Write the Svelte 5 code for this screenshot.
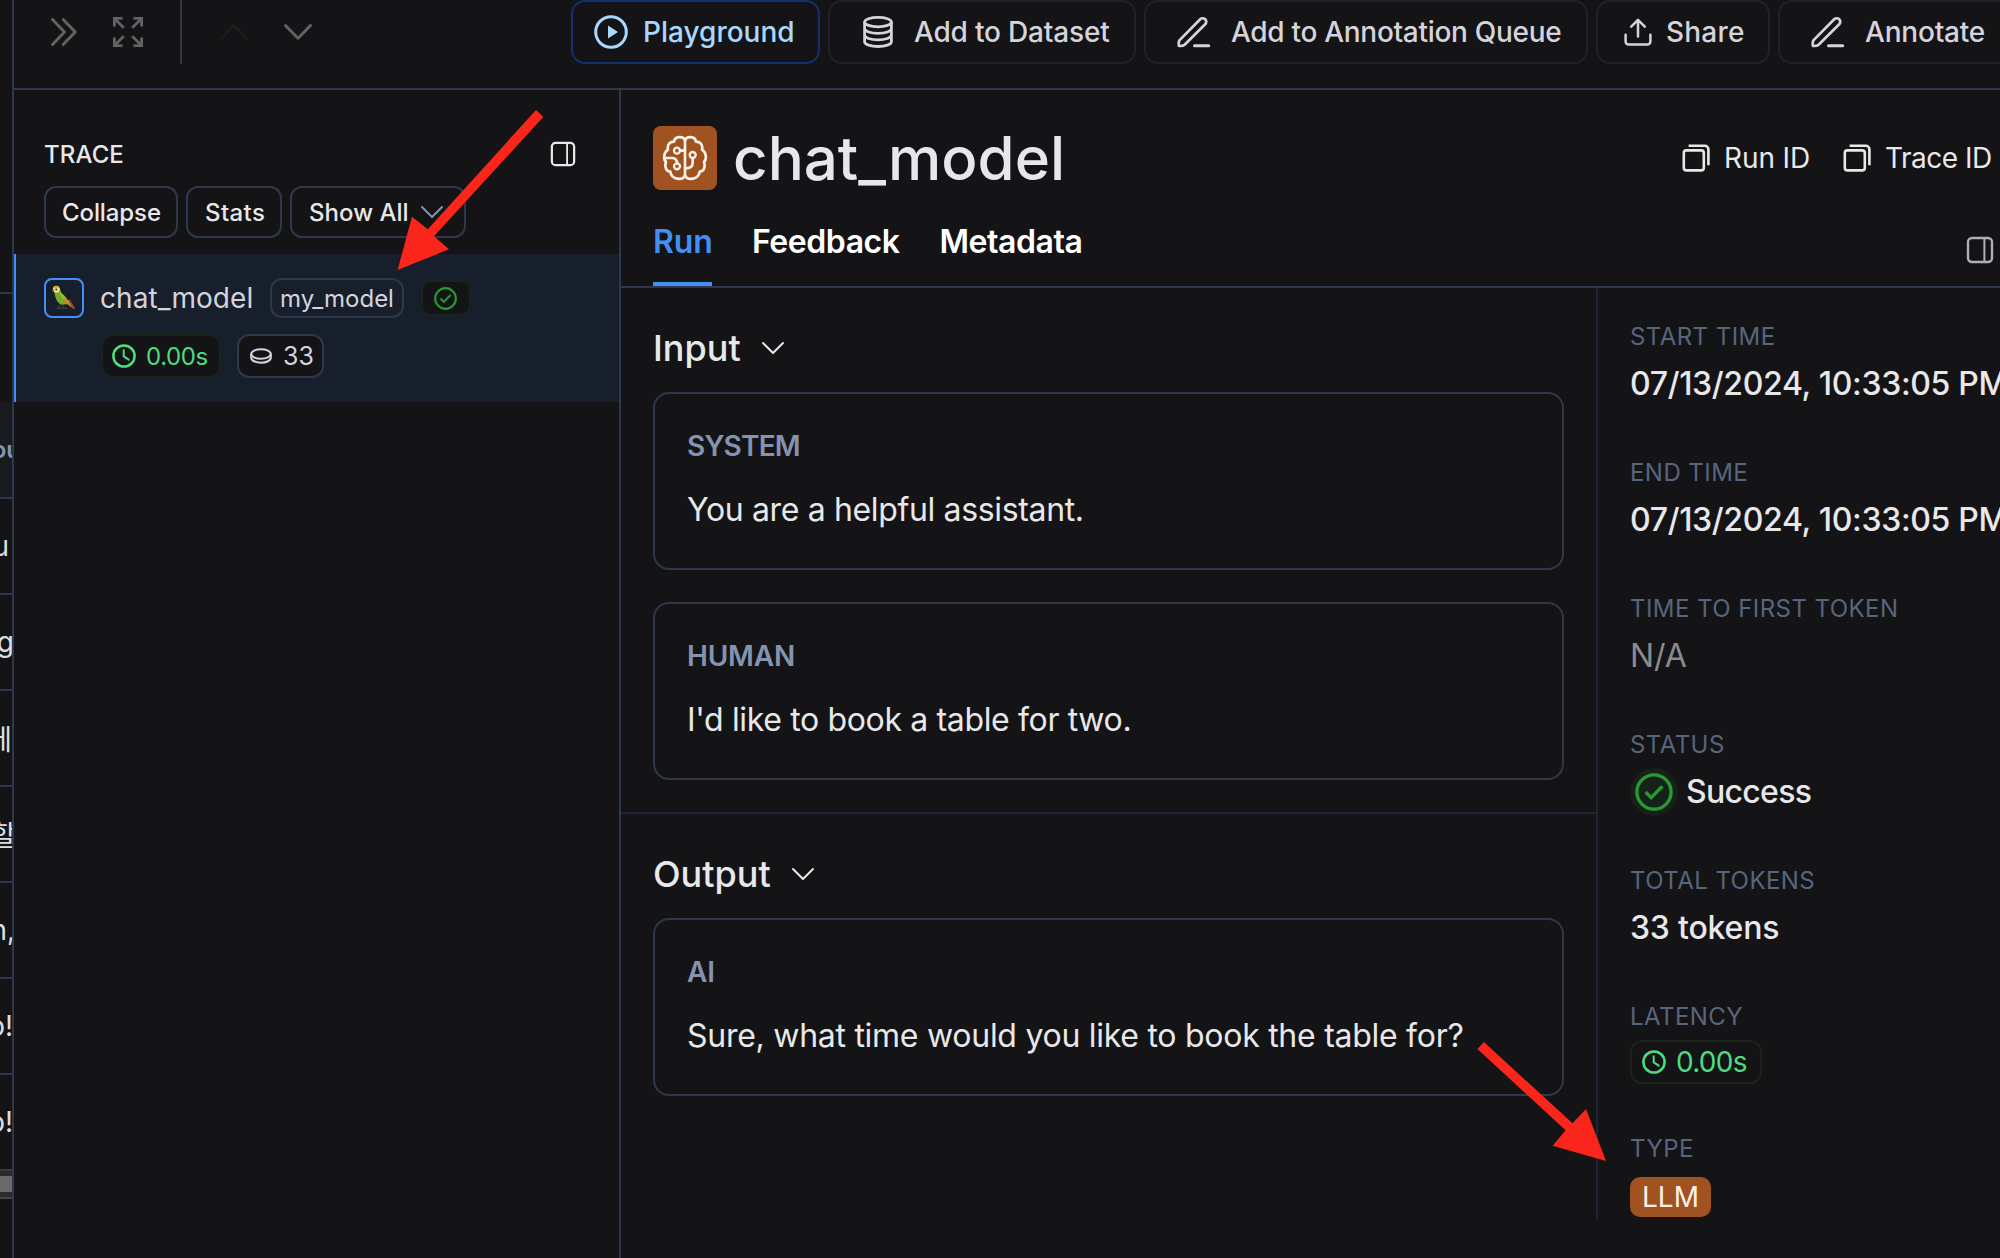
<script>
  const rows = [
    { text: 'u', shift: 3 },
    { text: 'g', shift: -2 },
    { text: '에', shift: 0 },
    { text: '할', shift: -4 },
    { text: 'n,', shift: -3 },
    { text: 'o!', shift: -1 },
    { text: 'o!', shift: -1 }
  ];

  const inputs = [
    { role: 'SYSTEM', tone: 'system', text: 'You are a helpful assistant.' },
    { role: 'HUMAN', tone: 'human', text: "I'd like to book a table for two." }
  ];
  const outputs = [
    { role: 'AI', tone: 'ai', text: 'Sure, what time would you like to book the table for?' }
  ];

  const tabs = ['Run', 'Feedback', 'Metadata'];
</script>

{#snippet pencil()}
  <svg class="pencil" viewBox="0 0 34 32" fill="none" stroke="currentColor" stroke-width="2.7" stroke-linecap="round" stroke-linejoin="round">
    <path d="M2.4 24.4 23.2 3.3a3.5 3.5 0 0 1 5 0 3.5 3.5 0 0 1 0 5L7.6 28.8c-1.500 1.400-3.600 1.300-5.700 1.100-.2-2-.6-4 .5-5.500z" />
    <path d="M17.5 29.7h14.2" stroke-width="3" />
  </svg>
{/snippet}

{#snippet chevron(cls)}
  <svg class="chevron {cls}" viewBox="0 0 24 14" fill="none" stroke="currentColor" stroke-width="2" stroke-linecap="round" stroke-linejoin="round">
    <path d="M2 2l10 10L22 2" />
  </svg>
{/snippet}

{#snippet sidebar(cls)}
  <svg class="sidebar-icon {cls}" viewBox="0 0 28 28" fill="none" stroke="currentColor">
    <rect x="2" y="2" width="24" height="24" rx="4" stroke-width="2.4" />
    <path d="M18.4 2v24" stroke-width="2" />
  </svg>
{/snippet}

{#snippet copy()}
  <svg class="copy" viewBox="0 0 28 28" fill="none" stroke="currentColor" stroke-width="2.6" stroke-linejoin="round">
    <rect x="1.8" y="6.4" width="20" height="20" rx="2.6" />
    <path d="M6.6 1.8h16.2a3.6 3.6 0 0 1 3.6 3.6v15.8" />
  </svg>
{/snippet}

{#snippet clock()}
  <svg class="clock" viewBox="0 0 24 24" fill="none" stroke="currentColor" stroke-linecap="round" stroke-linejoin="round">
    <circle cx="12" cy="12" r="10.6" stroke-width="2.5" />
    <path d="M11.7 6.3v6l5 3.4" stroke-width="2" />
  </svg>
{/snippet}

{#snippet check()}
  <svg viewBox="0 0 38 38" fill="none" stroke="currentColor" stroke-width="3.4" stroke-linejoin="miter">
    <circle cx="19" cy="19" r="17.1" />
    <path d="M10.6 19l5.6 5.6L27.4 13.2" />
  </svg>
{/snippet}

{#snippet message(m)}
  <article class="card {m.tone}">
    <h3>{m.role}</h3>
    <p>{m.text}</p>
  </article>
{/snippet}

<div class="app">
  <aside class="behind">
    <div class="top-cell"></div>
    <div class="filter-cell"></div>
    <div class="head-cell"><b>ou</b></div>
    {#each rows as row}
      <div class="cell"><span style:margin-right="{row.shift}px">{row.text}</span></div>
    {/each}
    <div class="scroll"><div class="thumb"></div></div>
  </aside>

  <div class="panel">
    <header class="toolbar">
      <div class="nav">
        <svg class="forward" viewBox="0 0 28 30" fill="none" stroke="currentColor" stroke-width="3" stroke-linecap="round" stroke-linejoin="round">
          <path d="M2.5 2.5 14.5 15l-12 12.5M13.2 2.5 25.2 15l-12 12.5" />
        </svg>
        <svg class="expand" viewBox="0 0 32 32" fill="none" stroke="currentColor" stroke-width="2.8">
          <path d="M2.4 10.5V2.4h8.1M2.4 2.4l9.4 9.4M21.5 2.4h8.1v8.1M29.6 2.4l-9.4 9.4M2.4 21.5v8.1h8.1M2.4 29.6l9.4-9.4M21.5 29.6h8.1v-8.1M29.6 29.6l-9.4-9.4" />
        </svg>
        <span class="rule"></span>
        <svg class="step up" viewBox="0 0 30 18" fill="none" stroke="currentColor" stroke-width="3" stroke-linecap="round" stroke-linejoin="round"><path d="M2.500 15.200 15 2.500l12.500 12.700" /></svg>
        <svg class="step" viewBox="0 0 30 18" fill="none" stroke="currentColor" stroke-width="3" stroke-linecap="round" stroke-linejoin="round"><path d="M2.500 2.500 15 15.200 27.500 2.500" /></svg>
      </div>
      <div class="actions">
        <button class="playground">
          <svg viewBox="0 0 34 34"><circle cx="17" cy="17" r="15.3" fill="none" stroke="currentColor" stroke-width="3" /><path d="M14 10.6v12.8l10-6.4z" fill="currentColor" /></svg>
          Playground
        </button>
        <button class="dataset">
          <svg viewBox="0 0 30 32" fill="none" stroke="currentColor" stroke-width="2.8">
            <ellipse cx="15" cy="6.1" rx="13.4" ry="4.7" />
            <path d="M1.6 6.1v19.6c0 2.7 6 4.8 13.4 4.8s13.4-2.1 13.4-4.8V6.1M1.6 12.6c0 2.7 6 4.8 13.4 4.8s13.4-2.1 13.4-4.8M1.6 19.1c0 2.7 6 4.8 13.4 4.8s13.4-2.1 13.4-4.8" />
          </svg>
          Add to Dataset
        </button>
        <button class="queue">{@render pencil()}Add to Annotation Queue</button>
        <button class="share">
          <svg viewBox="0 0 28 28" fill="none" stroke="currentColor" stroke-width="2.5" stroke-linecap="round" stroke-linejoin="round">
            <path d="M14 18.5V2M7.2 8.6 14 1.8l6.8 6.8M1.6 16.8v6.800a3 3 0 0 0 3 3h18.800a3 3 0 0 0 3-3v-6.800" />
          </svg>
          Share
        </button>
        <button class="annotate">{@render pencil()}Annotate</button>
      </div>
    </header>

    <div class="body">
      <section class="trace">
        <div class="trace-head">
          <h2>TRACE</h2>
          {@render sidebar('small')}
        </div>
        <div class="filters">
          <button class="collapse">Collapse</button>
          <button class="stats">Stats</button>
          <button class="show">Show All {@render chevron('muted')}</button>
        </div>
        <div class="node">
          <div class="node-main">
            <span class="parrot">
              <svg viewBox="0 0 26 26">
                <path d="M14 16l8.500 8.200 1.700-.7-5.600-9.100z" fill="#b7401d" />
                <path d="M3.600 5.500C3.300 10 5 16.500 9.600 19.600c2.500.2 5.500-.8 7.200-.2l3.700 3.200c-1.200-4.400-4.300-8.600-9-12.400L8.600 3z" fill="#79a928" />
                <path d="M7.500 6.500c5.200 2.400 9.200 7.200 11.200 12.700-4.600-1.800-8.700-5.500-11.200-12.700z" fill="#94bd32" />
                <path d="M13.500 13l5 6.300-5.500-2.800z" fill="#d87928" />
                <circle cx="5.300" cy="4.300" r="3.500" fill="#e8df8b" />
                <path d="M2.300 3.500C3 .700 6.600.400 8 2.300L5.200 3z" fill="#d8a628" />
                <path d="M3 4.200.900 6.500l2.300-.1z" fill="#b6473a" />
                <circle cx="5.300" cy="4.400" r=".9" fill="#2b2a18" />
                <path d="M8 20v2.600M12 20v2.600M5.500 23.300h11" stroke="#4b4640" stroke-width="1.100" fill="none" />
              </svg>
            </span>
            <span class="node-name">chat_model</span>
            <span class="model">my_model</span>
            <span class="ok">{@render check()}</span>
          </div>
          <div class="node-meta">
            <span class="latency">{@render clock()}0.00s</span>
            <span class="count">
              <svg viewBox="0 0 22 16" fill="none" stroke="currentColor" stroke-width="2"><ellipse cx="11" cy="6" rx="9.800" ry="4.700" /><path d="M1.200 6v3.800c0 2.700 4.200 4.900 9.800 4.900s9.800-2.200 9.800-4.900V6" /></svg>
              33
            </span>
          </div>
        </div>
      </section>

      <main class="run">
        <div class="run-head">
          <div class="title-row">
            <span class="brain">
              <svg viewBox="0 0 138 138" fill="none" stroke="currentColor" stroke-width="8" stroke-linejoin="round" stroke-linecap="round">
                <path d="M69 15C64 3 39 2 36 20 22 20 15 31 18 44 5 52 3 73 12 81c-5 15 1 29 13 29 4 24 36 28 44 12" />
                <path d="M69 15c5-12 30-13 33 5 14 0 21 11 18 24 13 8 15 29 6 37 5 15-1 29-13 29-4 24-36 28-44 12" />
                <path d="M69 15v107" />
                <circle cx="45" cy="47" r="9" stroke-width="7" /><path d="M54 47h14" />
                <circle cx="45" cy="94" r="9" stroke-width="7" /><path d="M8 69h22c10 0 15 5 15 16" />
                <circle cx="92" cy="60" r="9" stroke-width="7" /><path d="M92 69v14c0 11-6 17-22 17" />
              </svg>
            </span>
            <h1>chat_model</h1>
            <div class="ids">
              <span class="run-id">{@render copy()}Run ID</span>
              <span class="trace-id">{@render copy()}Trace ID</span>
            </div>
          </div>
          <nav class="tabs">
            {#each tabs as tab, i}
              <button class:active={i === 0}>{tab}</button>
            {/each}
            {@render sidebar('large')}
          </nav>
        </div>

        <div class="columns">
          <div class="content">
            <section>
              <h2>Input {@render chevron('')}</h2>
              {#each inputs as m}{@render message(m)}{/each}
            </section>
            <section>
              <h2>Output {@render chevron('')}</h2>
              {#each outputs as m}{@render message(m)}{/each}
            </section>
          </div>
          <dl class="details">
            <div><dt>START TIME</dt><dd class="strong">07/13/2024, 10:33:05 PM</dd></div>
            <div><dt>END TIME</dt><dd class="strong">07/13/2024, 10:33:05 PM</dd></div>
            <div><dt>TIME TO FIRST TOKEN</dt><dd class="empty">N/A</dd></div>
            <div><dt>STATUS</dt><dd class="success"><span class="halo">{@render check()}</span>Success</dd></div>
            <div><dt>TOTAL TOKENS</dt><dd class="strong tokens">33 tokens</dd></div>
            <div><dt>LATENCY</dt><dd class="pill-row"><span class="latency big">{@render clock()}0.00s</span></dd></div>
            <div><dt>TYPE</dt><dd class="type-row"><span class="llm">LLM</span></dd></div>
          </dl>
        </div>
      </main>
    </div>
  </div>

  <svg class="arrows" viewBox="0 0 2000 1258" fill="#fb261b">
    <path d="M536 110l7.300 7L434 236.300l15 13L397.600 270 412 216.700l15.800 12.600z" />
    <path d="M1483.900 1042l-6.500 7 88.200 81.300-12.900 15.400L1606 1161l-20-52-13.500 14.300z" />
  </svg>
</div>

<style>
  :global(body) { background: #141416; overflow: hidden; }
  .app, .app * { box-sizing: border-box; }
  .app {
    position: relative;
    display: flex;
    width: 2000px;
    height: 1258px;
    overflow: hidden;
    background: #141416;
    color: #e8e8ea;
    font-family: Inter, "Noto Sans CJK KR", sans-serif;
  }
  h1, h2, h3, p, dl, dd { margin: 0; }
  svg { display: block; flex: none; }
  button {
    display: flex;
    align-items: center;
    padding: 0;
    border: 0;
    background: none;
    color: inherit;
    font-family: inherit;
    white-space: nowrap;
  }

  .behind { width: 12px; flex: none; overflow: hidden; color: #dedee0; font-size: 28px; }
  .behind > div { display: flex; justify-content: flex-end; align-items: center; overflow: hidden; border-bottom: 2px solid #2d394b; }
  .top-cell { height: 294px; }
  .behind > .filter-cell { height: 108px; border: 0; }
  .head-cell { height: 97px; background: #181a1e; color: #8296b3; font-size: 24px; }
  .head-cell b { margin-right: -9px; font-weight: 600; }
  .cell { height: 96px; }
  .behind > .scroll { height: 30px; margin-top: -2px; background: #2b2b2c; border-top: 2px solid #3c3c3d; border-bottom: 2px solid #454546; }
  .thumb { width: 12px; height: 16px; background: #69696a; }

  .panel { flex: 1; min-width: 0; border-left: 2px solid #2d394b; display: flex; flex-direction: column; }
  .toolbar { display: flex; height: 90px; border-bottom: 2px solid #2d394b; flex: none; }
  .nav { width: 557px; height: 64px; padding-left: 36px; display: flex; align-items: center; color: #626264; flex: none; }
  .forward { width: 28px; height: 30px; }
  .expand { width: 32px; height: 32px; margin-left: 34px; }
  .rule { width: 2px; height: 64px; background: #2d394b; margin: 0 37px 0 36px; }
  .step { width: 30px; height: 18px; }
  .up { color: #1d1d1f; margin-right: 34px; }

  .actions { display: flex; gap: 8px; height: 64px; font-size: 28px; color: #d5d3db; flex: none; }
  .actions button { height: 64px; border: 2px solid #212127; border-radius: 14px; font-size: 28px; font-weight: 500; flex: none; }
  .actions .playground { width: 249px; padding-left: 21px; gap: 15px; border-color: #12306e; color: #a8d8ff; letter-spacing: 0; }
  .playground svg { width: 34px; height: 34px; }
  .dataset { width: 308px; padding-left: 33px; gap: 21px; letter-spacing: -.18px; }
  .dataset svg { width: 30px; height: 32px; }
  .queue { width: 444px; padding-left: 31px; gap: 20px; letter-spacing: -.3px; }
  .pencil { width: 34px; height: 32px; }
  .share { width: 174px; padding-left: 26px; gap: 14px; letter-spacing: .2px; }
  .share svg { width: 28px; height: 28px; }
  .annotate { width: 240px; padding-left: 31px; gap: 20px; letter-spacing: -.2px; }

  .body { flex: 1; display: flex; min-height: 0; }
  .trace { width: 607px; border-right: 2px solid #2d394b; flex: none; }
  .trace-head { display: flex; align-items: center; justify-content: space-between; padding: 44px 43px 0 30px; height: 84px; }
  .trace-head h2 { font-size: 24px; line-height: 40px; font-weight: 500; letter-spacing: .1px; padding-top: 2px; }
  .small { width: 26px; height: 26px; }
  .filters { display: flex; gap: 8px; padding: 12px 0 16px 30px; }
  .filters button { height: 52px; border: 2px solid #2d394b; border-radius: 12px; font-size: 24px; font-weight: 500; }
  .filters .collapse { width: 134px; padding-left: 16px; letter-spacing: -.1px; }
  .filters .stats { width: 96px; padding-left: 17px; letter-spacing: .4px; }
  .filters .show { width: 176px; padding-left: 17px; gap: 11px; letter-spacing: .03px; }
  .chevron { width: 24px; height: 14px; }
  .muted { color: #8494ab; }
  .node { height: 148px; padding: 24px 0 0 28px; background: #181f2c; border-left: 2px solid #438ff7; }
  .node-main { display: flex; align-items: center; height: 40px; }
  .parrot { width: 40px; height: 40px; border: 2px solid #438ff7; border-radius: 8px; display: flex; align-items: center; justify-content: center; }
  .parrot svg { width: 26px; height: 26px; }
  .node-name { margin-left: 16px; width: 153px; font-size: 28px; line-height: 40px; letter-spacing: .05px; color: #d5d3db; }
  .model { width: 134px; height: 40px; margin-left: 17px; padding: 1px 0 0 8px; border: 2px solid #2d394b; border-radius: 12px; font-size: 24px; line-height: 36px; letter-spacing: 0; color: #d5d3db; }
  .ok { width: 50px; height: 36px; margin-left: 16.500px; border: 2px solid #17241a; border-radius: 10px; background: #141416; color: #279a32; display: flex; align-items: center; justify-content: center; }
  .ok svg { width: 23px; height: 23px; }
  .node-meta { display: flex; gap: 16px; padding: 16px 0 0 57px; }
  .latency { display: flex; align-items: center; width: 120px; height: 44px; padding-left: 9px; gap: 10px; border: 2px solid #17241a; border-radius: 12px; background: #141416; color: #4ade80; font-size: 24px; letter-spacing: -.4px; }
  .clock { width: 24px; height: 24px; }
  .count { display: flex; align-items: center; width: 87px; height: 44px; padding-left: 11px; gap: 11px; border: 2px solid #2d394b; border-radius: 12px; background: #141416; color: #d5d3db; font-size: 25px; }
  .count svg { width: 22px; height: 16px; }

  .run { flex: 1; min-width: 0; }
  .run-head { height: 198px; border-bottom: 2px solid #2d394b; padding: 36px 0 0 32px; }
  .title-row { display: flex; align-items: center; height: 64px; }
  .brain { width: 64px; height: 64px; border-radius: 8px; background: #a05320; color: #fdf1e8; display: flex; align-items: center; justify-content: center; flex: none; }
  .brain svg { width: 46px; height: 46px; }
  h1 { margin-left: 16px; font-size: 60px; line-height: 64px; font-weight: 500; letter-spacing: 0; color: #e8e6ec; flex: none; }
  .ids { display: flex; margin-left: auto; padding-right: 6px; flex: none; font-size: 28px; }
  .ids span { display: flex; align-items: center; }
  .run-id { width: 161px; gap: 14px; letter-spacing: -.1px; }
  .trace-id { width: 151px; gap: 14px; letter-spacing: -.5px; }
  .copy { width: 28px; height: 28px; }
  .tabs { display: flex; height: 96px; gap: 40px; padding-right: 6px; }
  .tabs button { font-size: 32px; font-weight: 600; color: #fff; padding: 11px 0 0; border-bottom: 4px solid transparent; letter-spacing: -.45px; }
  .tabs button.active { width: 59px; color: #438ff7; border-color: #438ff7; letter-spacing: -.1px; }
  .large { width: 28px; height: 28px; margin: 46px 0 0 auto; color: #b0b0b2; }

  .columns { display: flex; }
  .content { width: 975px; flex: none; }
  .content section { padding: 32px 32px 0; }
  .content section + section { border-top: 2px solid #1b2535; margin-top: 32px; }
  .content h2 { display: flex; align-items: center; gap: 20px; font-size: 36px; line-height: 56px; font-weight: 500; margin-bottom: 16px; }
  .card { height: 178px; padding: 32px 32px 0; border: 2px solid #2d394b; border-radius: 16px; width: 911px; }
  .card + .card { margin-top: 32px; }
  h3 { font-size: 28px; line-height: 40px; font-weight: 600; color: #8494b0; margin-bottom: 20px; }
  .card p { font-size: 32px; line-height: 48px; letter-spacing: -.35px; white-space: nowrap; }
  .system h3 { letter-spacing: -.8px; }
  .human h3, .ai h3 { letter-spacing: -.2px; }
  .ai p { letter-spacing: -.27px; }

  .details { height: 932px; flex: 1; min-width: 0; overflow: hidden; border-left: 2px solid #1b2535; padding: 32px 0 0 32px; white-space: nowrap; }
  .details > div { margin-bottom: 48px; }
  dt { font-size: 24px; line-height: 32px; height: 32px; padding-top: 1px; letter-spacing: .44px; color: #57657d; margin-bottom: 8px; }
  dd { font-size: 32px; line-height: 48px; height: 48px; }
  .strong { font-weight: 500; letter-spacing: -.33px; }
  .tokens { letter-spacing: -.2px; }
  .empty { color: #8b8b8d; }
  .success { display: flex; align-items: center; gap: 8px; font-weight: 500; letter-spacing: -.7px; }
  .halo { width: 48px; height: 48px; border-radius: 50%; background: #17211a; color: #279a32; display: flex; align-items: center; justify-content: center; }
  .halo svg { width: 38px; height: 38px; }
  .pill-row { height: 44px; }
  .big { width: 132px; padding-left: 10px; gap: 10px; font-size: 28px; letter-spacing: -.75px; }
  .type-row { padding-top: 5px; }
  .llm { display: block; width: 81px; height: 40px; border-radius: 10px; background: #a05320; color: #fdf1e8; font-size: 28px; line-height: 40px; padding-left: 12px; }

  .arrows { position: absolute; top: 0; left: 0; width: 2000px; height: 1258px; pointer-events: none; }
</style>
